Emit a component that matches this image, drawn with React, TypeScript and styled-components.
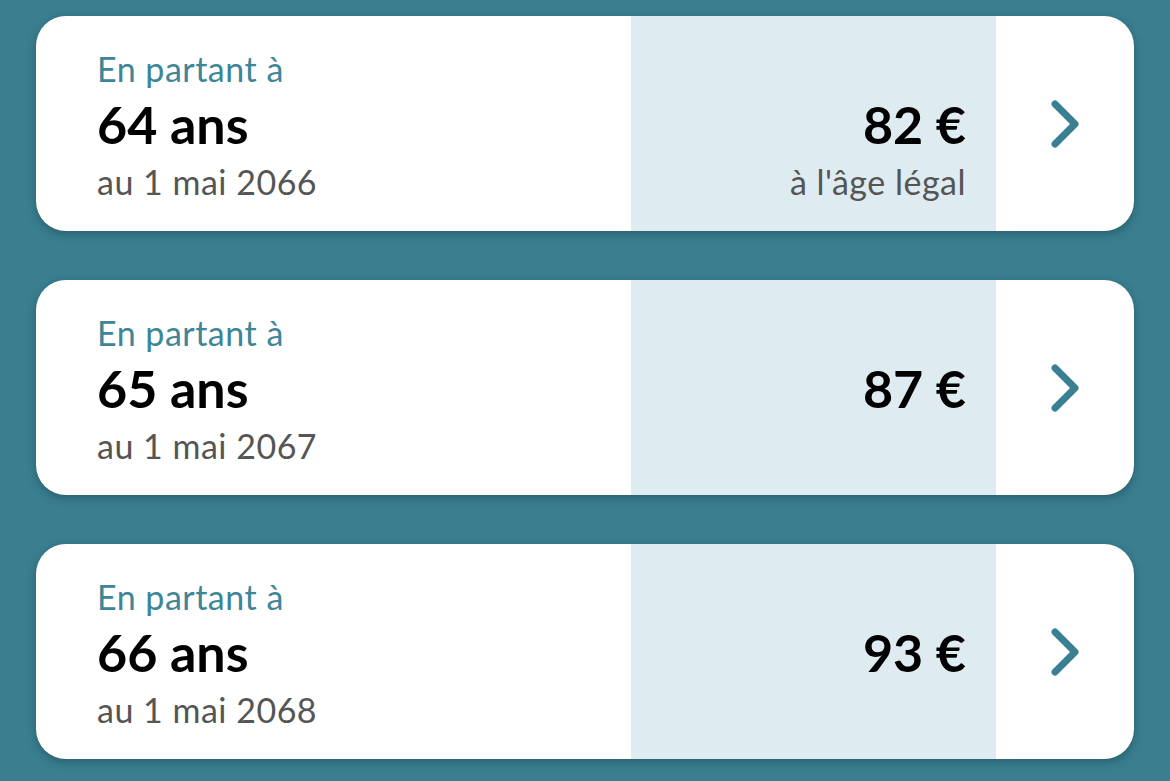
import React from "react";
import styled, { createGlobalStyle } from "styled-components";

const GlobalStyle = createGlobalStyle`
  html, body {
    margin: 0;
    padding: 0;
    background: #3a7e8f;
  }
  body {
    font-family: Lato, "Noto Sans", sans-serif;
    -webkit-font-smoothing: antialiased;
  }
`;

const Page = styled.div`
  display: flex;
  flex-direction: column;
  gap: 49px;
  padding: 16px 36px 30px;
  min-height: 781px;
  box-sizing: border-box;
  background: #3a7e8f;
`;

const Card = styled.div`
  display: grid;
  grid-template-columns: 1fr 365px 138px;
  height: 215px;
  background: #ffffff;
  border-radius: 30px;
  overflow: hidden;
  box-shadow: 0 3px 9px rgba(10, 40, 50, 0.35);
`;

const Info = styled.div`
  display: flex;
  flex-direction: column;
  padding: 34px 0 0 61px;
`;

const Label = styled.div`
  font-size: 34px;
  line-height: 38px;
  letter-spacing: 0.5px;
  color: #3d8597;
`;

const Title = styled.div`
  font-size: 52px;
  line-height: 72px;
  font-weight: 700;
  color: #000;
`;

const Sub = styled.div`
  font-size: 34px;
  line-height: 44px;
  letter-spacing: 0.5px;
  color: #555;
`;

const Amount = styled.div`
  display: flex;
  flex-direction: column;
  align-items: flex-end;
  background: #deebf0;
  padding: 72px 30px 0 0;
`;

const Action = styled.div`
  display: flex;
  align-items: center;
  justify-content: center;
`;

const Chevron = () => (
  <svg width="30" height="48" viewBox="0 0 30 48" fill="none">
    <path
      d="M5 4 L25 24 L5 44"
      stroke="#3a7f92"
      strokeWidth="7"
      strokeLinecap="round"
      strokeLinejoin="round"
    />
  </svg>
);

const rows = [
  { age: 64, date: "au 1 mai 2066", amount: "82 €", note: "à l'âge légal" },
  { age: 65, date: "au 1 mai 2067", amount: "87 €" },
  { age: 66, date: "au 1 mai 2068", amount: "93 €" },
];

export default function App() {
  return (
    <>
      <GlobalStyle />
      <Page>
        {rows.map((r) => (
          <Card key={r.age}>
            <Info>
              <Label>En partant à</Label>
              <Title>{r.age} ans</Title>
              <Sub>{r.date}</Sub>
            </Info>
            <Amount>
              <Title>{r.amount}</Title>
              {r.note && <Sub>{r.note}</Sub>}
            </Amount>
            <Action>
              <Chevron />
            </Action>
          </Card>
        ))}
      </Page>
    </>
  );
}
